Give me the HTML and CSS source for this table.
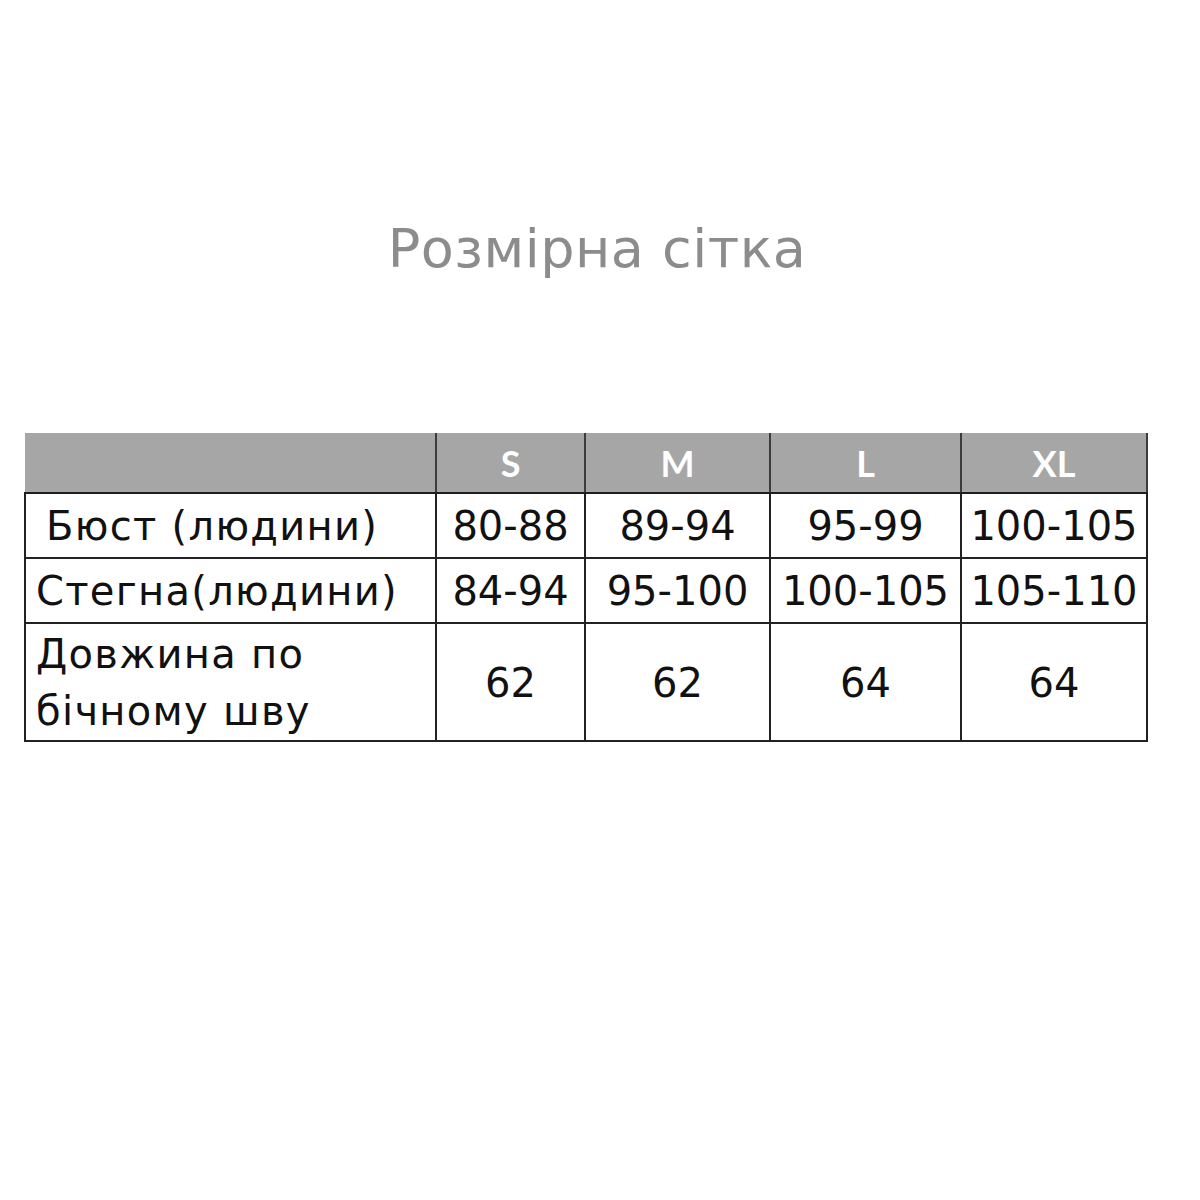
FILE: index.html
```html
<!DOCTYPE html>
<html lang="uk">
<head>
<meta charset="utf-8">
<title>Розмірна сітка</title>
<link rel="stylesheet" href="styles.css">
</head>
<body>
<main class="page">
  <h1 class="title">Розмірна сітка</h1>
  <table class="sizes">
    <colgroup>
      <col class="c-label">
      <col class="c-s">
      <col class="c-m">
      <col class="c-l">
      <col class="c-xl">
    </colgroup>
    <thead>
      <tr>
        <th class="blank"></th>
        <th>S</th>
        <th>M</th>
        <th>L</th>
        <th>XL</th>
      </tr>
    </thead>
    <tbody>
      <tr class="r1">
        <td class="label indent">Бюст (людини)</td>
        <td>80-88</td>
        <td>89-94</td>
        <td>95-99</td>
        <td>100-105</td>
      </tr>
      <tr class="r2">
        <td class="label">Стегна(людини)</td>
        <td>84-94</td>
        <td>95-100</td>
        <td>100-105</td>
        <td>105-110</td>
      </tr>
      <tr class="r3">
        <td class="label">Довжина по<br>бічному шву</td>
        <td>62</td>
        <td>62</td>
        <td>64</td>
        <td>64</td>
      </tr>
    </tbody>
  </table>
</main>
</body>
</html>
```

FILE: styles.css
```css
html, body {
  margin: 0;
  padding: 0;
  background: #ffffff;
}

.page {
  width: 1200px;
  height: 1200px;
  box-sizing: border-box;
  padding: 213px 0 0 24px;
}

.title {
  margin: 0;
  width: 1146px;
  text-align: center;
  font-family: "DejaVu Sans", sans-serif;
  font-weight: 400;
  font-size: 54px;
  line-height: 72px;
  color: #8c8c8c;
  letter-spacing: 0.5px;
}

.sizes {
  margin-top: 148px;
  width: 1122px;
  table-layout: fixed;
  border-collapse: collapse;
  font-family: "DejaVu Sans", sans-serif;
  color: #111111;
}

.c-label { width: 411px; }
.c-s { width: 149px; }
.c-m { width: 185px; }
.c-l { width: 191px; }
.c-xl { width: 186px; }

.sizes th {
  background: #a6a6a6;
  color: #ffffff;
  font-family: Lato, "Liberation Sans", sans-serif;
  font-weight: 700;
  font-size: 36px;
  height: 59px;
  padding: 0;
  text-align: center;
  vertical-align: middle;
  border-left: 2px solid #3c3c3c;
  border-right: 2px solid #3c3c3c;
  border-bottom: 2px solid #1e1e1e;
}

.sizes th.blank {
  border-left: none;
}

.sizes td {
  border: 2px solid #222222;
  padding: 0;
  text-align: center;
  vertical-align: middle;
  font-size: 40px;
  font-weight: 400;
  line-height: 60px;
  white-space: nowrap;
}

.sizes td.label {
  text-align: left;
  padding-left: 10px;
  letter-spacing: 1.3px;
}

.sizes td.indent {
  padding-left: 20px;
}

.r1 td { height: 63px; }
.r2 td { height: 63px; }
.r3 td {
  height: 114px;
  padding-top: 2px;
  line-height: 57px;
}
```
